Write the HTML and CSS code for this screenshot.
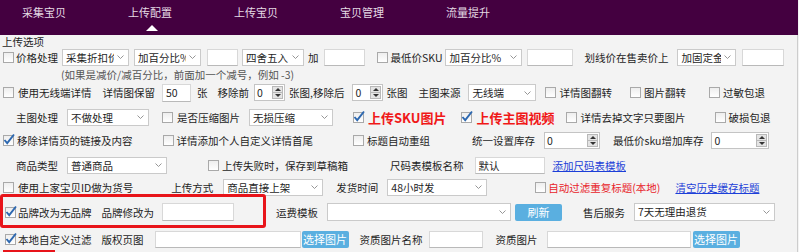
FILE: index.html
```html
<!DOCTYPE html>
<html>
<head>
  <meta charset="utf-8">
  <title>上传配置</title>
  <link rel="stylesheet" href="styles.css">
</head>
<body>
<div class="app">
  <div class="nav">
    <span class="tab">采集宝贝</span>
    <span class="tab active">上传配置</span>
    <span class="tab">上传宝贝</span>
    <span class="tab">宝贝管理</span>
    <span class="tab">流量提升</span>
  </div>

  <div class="panel">
    <div class="caption">上传选项</div>

    <!-- 价格处理 -->
    <div class="row r1">
      <span class="cb ml3"></span><span class="ml2">价格处理</span>
      <span class="sel w67 ml4"><span class="sel-txt">采集折扣价</span><svg class="chev" viewBox="0 0 7 4"><path d="M0.5 0.5L3.5 3.5L6.5 0.5"/></svg></span>
      <span class="sel w67 ml5"><span class="sel-txt">加百分比%</span><svg class="chev" viewBox="0 0 7 4"><path d="M0.5 0.5L3.5 3.5L6.5 0.5"/></svg></span>
      <span class="inp w31 ml6"></span>
      <span class="sel w62 ml4"><span class="sel-txt">四舍五入</span><svg class="chev" viewBox="0 0 7 4"><path d="M0.5 0.5L3.5 3.5L6.5 0.5"/></svg></span>
      <span class="ml4">加</span>
      <span class="inp w41 ml5"></span>
      <span class="cb ml12"></span><span class="ml3">最低价SKU</span>
      <span class="sel w77 ml3"><span class="sel-txt">加百分比%</span><svg class="chev" viewBox="0 0 7 4"><path d="M0.5 0.5L3.5 3.5L6.5 0.5"/></svg></span>
      <span class="inp w46 ml5"></span>
      <span class="ml11">划线价在售卖价上</span>
      <span class="sel w59 ml9"><span class="sel-txt">加固定金额</span><svg class="chev" viewBox="0 0 7 4"><path d="M0.5 0.5L3.5 3.5L6.5 0.5"/></svg></span>
      <span class="inp w42 ml6"></span>
    </div>

    <div class="row r2">
      <span class="hint">(如果是减价/减百分比，前面加一个减号，例如 -3)</span>
    </div>

    <!-- 详情图 -->
    <div class="row r3">
      <span class="cb ml3"></span><span class="ml4">使用无线端详情</span>
      <span class="ml11">详情图保留</span>
      <span class="inp w29 tall ml7">50</span>
      <span class="ml6">张</span>
      <span class="ml10">移除前</span>
      <span class="spin w31 ml5"><span class="spin-val">0</span><span class="spin-btns"><i class="up"></i><i class="dn"></i></span></span>
      <span class="ml4">张图,移除后</span>
      <span class="spin w31 ml8"><span class="spin-val">0</span><span class="spin-btns"><i class="up"></i><i class="dn"></i></span></span>
      <span class="ml3">张图</span>
      <span class="ml11">主图来源</span>
      <span class="sel w68 ml8"><span class="sel-txt">无线端</span><svg class="chev" viewBox="0 0 7 4"><path d="M0.5 0.5L3.5 3.5L6.5 0.5"/></svg></span>
      <span class="cb ml9"></span><span class="ml3">详情图翻转</span>
      <span class="cb ml18"></span><span class="ml3">图片翻转</span>
      <span class="cb ml23"></span><span class="ml3">过敏包退</span>
    </div>

    <!-- 主图处理 -->
    <div class="row r4">
      <span class="ml16">主图处理</span>
      <span class="sel w82 ml9"><span class="sel-txt">不做处理</span><svg class="chev" viewBox="0 0 7 4"><path d="M0.5 0.5L3.5 3.5L6.5 0.5"/></svg></span>
      <span class="cb ml13"></span><span class="ml4">是否压缩图片</span>
      <span class="sel w84 ml9"><span class="sel-txt">无损压缩</span><svg class="chev" viewBox="0 0 7 4"><path d="M0.5 0.5L3.5 3.5L6.5 0.5"/></svg></span>
      <span class="cb on ml20"><svg viewBox="0 0 12 12"><path d="M1.5 6L4.2 9.2L11 0.5"/></svg></span><span class="big ml4">上传SKU图片</span>
      <span class="cb on ml14"><svg viewBox="0 0 12 12"><path d="M1.5 6L4.2 9.2L11 0.5"/></svg></span><span class="big ml5">上传主图视频</span>
      <span class="cb ml11"></span><span class="ml4">详情去掉文字只要图片</span>
      <span class="cb ml29"></span><span class="ml3">破损包退</span>
    </div>

    <!-- 详情页 -->
    <div class="row r5">
      <span class="cb on ml3"><svg viewBox="0 0 12 12"><path d="M1.5 6L4.2 9.2L11 0.5"/></svg></span><span class="ml3">移除详情页的链接及内容</span>
      <span class="cb ml30"></span><span class="ml3">详情添加个人自定义详情首尾</span>
      <span class="cb ml40"></span><span class="ml3">标题自动重组</span>
      <span class="ml42">统一设置库存</span>
      <span class="spin w56 ml9"><span class="spin-val">0</span><span class="spin-btns"><i class="up"></i><i class="dn"></i></span></span>
      <span class="ml13">最低价sku增加库存</span>
      <span class="spin w58 ml8"><span class="spin-val">0</span><span class="spin-btns"><i class="up"></i><i class="dn"></i></span></span>
    </div>

    <!-- 商品类型 -->
    <div class="row r6">
      <span class="ml16">商品类型</span>
      <span class="sel w100 ml9"><span class="sel-txt">普通商品</span><svg class="chev" viewBox="0 0 7 4"><path d="M0.5 0.5L3.5 3.5L6.5 0.5"/></svg></span>
      <span class="cb ml41"></span><span class="ml3">上传失败时，保存到草稿箱</span>
      <span class="ml42">尺码表模板名称</span>
      <span class="inp w70 ml11">默认</span>
      <a class="link ml8" href="#">添加尺码表模板</a>
    </div>

    <!-- 上传方式 -->
    <div class="row r7">
      <span class="cb ml3"></span><span class="ml4">使用上家宝贝ID做为货号</span>
      <span class="ml38">上传方式</span>
      <span class="sel w100 ml10"><span class="sel-txt">商品直接上架</span><svg class="chev" viewBox="0 0 7 4"><path d="M0.5 0.5L3.5 3.5L6.5 0.5"/></svg></span>
      <span class="ml13">发货时间</span>
      <span class="sel w100 ml9"><span class="sel-txt">48小时发</span><svg class="chev" viewBox="0 0 7 4"><path d="M0.5 0.5L3.5 3.5L6.5 0.5"/></svg></span>
      <span class="cb ml48"></span><span class="warn ml2">自动过滤重复标题(本地)</span>
      <a class="link ml15" href="#">清空历史缓存标题</a>
    </div>

    <!-- 品牌 / 运费 -->
    <div class="row r8">
      <span class="cb on ml5"><svg viewBox="0 0 12 12"><path d="M1.5 6L4.2 9.2L11 0.5"/></svg></span><span class="ml2">品牌改为无品牌</span>
      <span class="ml10">品牌修改为</span>
      <span class="inp w72 tall ml8"></span>
      <span class="ml42">运费模板</span>
      <span class="sel w184 tall ml9"><span class="sel-txt"></span><svg class="chev" viewBox="0 0 7 4"><path d="M0.5 0.5L3.5 3.5L6.5 0.5"/></svg></span>
      <span class="btn tall ml4">刷新</span>
      <span class="ml21">售后服务</span>
      <span class="sel w141 tall ml9"><span class="sel-txt">7天无理由退货</span><svg class="chev" viewBox="0 0 7 4"><path d="M0.5 0.5L3.5 3.5L6.5 0.5"/></svg></span>
      <div class="mark"></div>
    </div>

    <!-- 过滤 / 图片 -->
    <div class="row r9">
      <span class="cb on ml5"><svg viewBox="0 0 12 12"><path d="M1.5 6L4.2 9.2L11 0.5"/></svg></span><span class="ml2">本地自定义过滤</span>
      <span class="ml10">版权页图</span>
      <span class="inp w146 ml11"></span>
      <span class="btn ml1">选择图片</span>
      <span class="ml11">资质图片名称</span>
      <span class="inp w54 ml6"></span>
      <span class="ml13">资质图片</span>
      <span class="inp w144 ml9"></span>
      <span class="btn ml2">选择图片</span>
      <div class="mark-next"></div>
    </div>
  </div>
</div>
</body>
</html>
```

FILE: styles.css
```css
* {
  box-sizing: border-box;
}

body {
  margin: 0;
  background: #ffffff;
  font-family: "Noto Sans CJK SC", "Microsoft YaHei", sans-serif;
  font-size: 10.5px;
  color: #1e1e1e;
}

.app {
  width: 799px;
  height: 252px;
  overflow: hidden;
  background: #f3f3f3;
}

/* top navigation */
.nav {
  width: 798px;
  height: 35px;
  background: #440040;
  display: flex;
  padding-left: 22px;
  gap: 62px;
}

.tab {
  position: relative;
  color: #e4dae4;
  font-size: 11px;
  line-height: 25px;
}

.tab.active::after {
  content: "";
  position: absolute;
  left: 50%;
  margin-left: -4px;
  top: 25px;
  border-left: 6px solid transparent;
  border-right: 6px solid transparent;
  border-bottom: 6px solid #ffffff;
}

.panel {
  width: 798px;
  height: 217px;
  border-right: 1px solid #cdcdcd;
}

.caption {
  height: 13px;
  line-height: 13px;
  padding-left: 2px;
}

/* rows */
.row {
  position: relative;
  display: flex;
  align-items: center;
  white-space: nowrap;
}

.r1 { height: 18px; }
.r2 { height: 16px; }
.r3 { height: 21px; }
.r4 { height: 28px; }
.r5 { height: 19px; }
.r6 { height: 30px; }
.r7 { height: 14px; }
.r8 { height: 36px; }
.r9 { height: 18px; }

.row > * {
  flex: none;
}

.hint {
  margin-left: 61px;
  color: #555555;
}

.big {
  font-size: 13px;
  font-weight: bold;
  color: #f01818;
}

.warn {
  color: #e8232a;
}

.link {
  color: #1c3fd8;
  text-decoration: underline;
}

/* checkbox */
.cb {
  position: relative;
  width: 11px;
  height: 11px;
  border: 1px solid #a9a9a9;
  background: linear-gradient(#eeeeee, #ffffff);
}

.cb svg {
  position: absolute;
  left: -1px;
  top: -2px;
  width: 12px;
  height: 12px;
  overflow: visible;
}

.cb svg path {
  fill: none;
  stroke: #2d68b0;
  stroke-width: 1.9;
}

/* select */
.sel {
  display: flex;
  align-items: center;
  height: 17px;
  padding: 0 4px 0 3px;
  background: #ffffff;
  border: 1px solid #cacaca;
}

.sel-txt {
  flex: 1;
  overflow: hidden;
}

.chev {
  width: 7px;
  height: 4px;
  margin-left: 3px;
  flex: none;
}

.chev path {
  fill: none;
  stroke: #8a8a8a;
  stroke-width: 0.9;
}

/* text input */
.inp {
  height: 17px;
  line-height: 15px;
  padding-left: 3px;
  background: #ffffff;
  border: 1px solid #d8d8d8;
  border-bottom-color: #b9b9b9;
}

.tall {
  height: 18px;
  line-height: 16px;
}

/* spin box */
.spin {
  display: flex;
  height: 17px;
  background: #ffffff;
  border: 1px solid #c4c4c4;
}

.spin-val {
  flex: 1;
  line-height: 15px;
  padding-left: 2px;
}

.spin-btns {
  width: 11px;
  margin: 1px;
  display: flex;
  flex-direction: column;
  background: #e4e4e4;
  border: 1px solid #b8b8b8;
}

.spin-btns i {
  flex: 1;
  display: flex;
  align-items: center;
  justify-content: center;
}

.spin-btns i.up {
  border-bottom: 1px solid #b8b8b8;
}

.spin-btns i::before {
  content: "";
  border-left: 3px solid transparent;
  border-right: 3px solid transparent;
}

.spin-btns i.up::before {
  border-bottom: 3px solid #333333;
}

.spin-btns i.dn::before {
  border-top: 3px solid #333333;
}

/* blue button */
.btn {
  width: 47px;
  height: 17px;
  line-height: 17px;
  text-align: center;
  color: #ffffff;
  font-size: 11px;
  background: #5aafe0;
  border-radius: 2px;
}

/* red highlight marks */
.mark {
  position: absolute;
  left: 0;
  top: 0;
  width: 266px;
  height: 34px;
  border: 3px solid #e8141a;
  border-radius: 3px;
}

.mark-next {
  position: absolute;
  left: 3px;
  top: 20px;
  width: 52px;
  height: 3px;
  background: #e8141a;
}

/* spacing */
.ml1 { margin-left: 1px; }
.ml2 { margin-left: 2px; }
.ml3 { margin-left: 3px; }
.ml4 { margin-left: 4px; }
.ml5 { margin-left: 5px; }
.ml6 { margin-left: 6px; }
.ml7 { margin-left: 7px; }
.ml8 { margin-left: 8px; }
.ml9 { margin-left: 9px; }
.ml10 { margin-left: 10px; }
.ml11 { margin-left: 11px; }
.ml12 { margin-left: 12px; }
.ml13 { margin-left: 13px; }
.ml14 { margin-left: 14px; }
.ml15 { margin-left: 15px; }
.ml16 { margin-left: 16px; }
.ml18 { margin-left: 18px; }
.ml20 { margin-left: 20px; }
.ml21 { margin-left: 21px; }
.ml23 { margin-left: 23px; }
.ml29 { margin-left: 29px; }
.ml30 { margin-left: 30px; }
.ml38 { margin-left: 38px; }
.ml40 { margin-left: 40px; }
.ml41 { margin-left: 41px; }
.ml42 { margin-left: 42px; }
.ml48 { margin-left: 48px; }

/* widths */
.w29 { width: 29px; }
.w31 { width: 31px; }
.w41 { width: 41px; }
.w42 { width: 42px; }
.w46 { width: 46px; }
.w54 { width: 54px; }
.w56 { width: 56px; }
.w58 { width: 58px; }
.w59 { width: 59px; }
.w62 { width: 62px; }
.w67 { width: 67px; }
.w68 { width: 68px; }
.w70 { width: 70px; }
.w72 { width: 72px; }
.w77 { width: 77px; }
.w82 { width: 82px; }
.w84 { width: 84px; }
.w100 { width: 100px; }
.w141 { width: 141px; }
.w144 { width: 144px; }
.w146 { width: 146px; }
.w184 { width: 184px; }
```
